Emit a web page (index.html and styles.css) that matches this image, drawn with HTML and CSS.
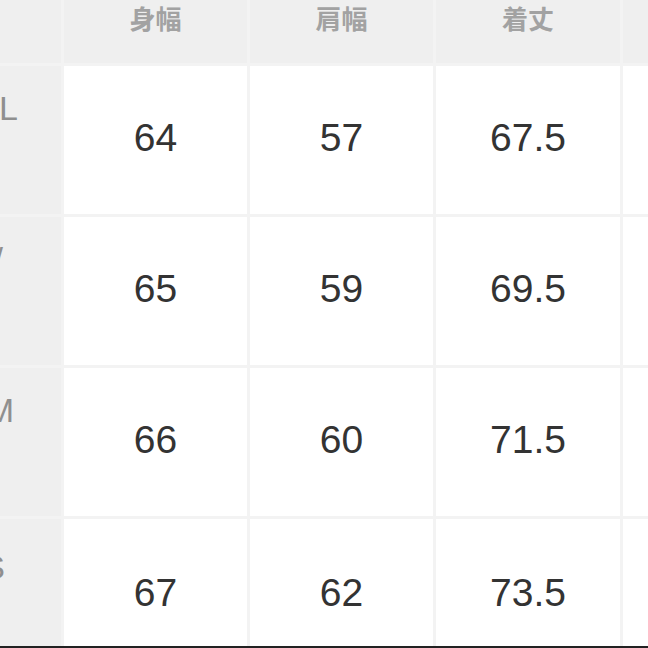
FILE: index.html
```html
<!DOCTYPE html>
<html lang="ja">
<head>
<meta charset="utf-8">
<title>サイズ表</title>
<link rel="stylesheet" href="styles.css">
</head>
<body>
<div class="page">
  <div class="table">
    <div class="head corner"></div>
    <div class="head"><span>身幅</span></div>
    <div class="head"><span>肩幅</span></div>
    <div class="head"><span>着丈</span></div>
    <div class="head"></div>

    <div class="label"><span class="lb lb1">XL</span></div>
    <div class="cell">64</div>
    <div class="cell">57</div>
    <div class="cell">67.5</div>
    <div class="cell"></div>

    <div class="label"><span class="lb lb2">/</span></div>
    <div class="cell">65</div>
    <div class="cell">59</div>
    <div class="cell">69.5</div>
    <div class="cell"></div>

    <div class="label"><span class="lb lb3">M</span></div>
    <div class="cell">66</div>
    <div class="cell">60</div>
    <div class="cell">71.5</div>
    <div class="cell"></div>

    <div class="label"><span class="lb lb4">S</span></div>
    <div class="cell last">67</div>
    <div class="cell last">62</div>
    <div class="cell last">73.5</div>
    <div class="cell last"></div>
  </div>
  <div class="bar"></div>
</div>
</body>
</html>
```

FILE: styles.css
```css
html, body {
  margin: 0;
  padding: 0;
  background: #f2f2f2;
}
.page {
  width: 648px;
  height: 648px;
  overflow: hidden;
  display: flex;
  flex-direction: column;
}
.table {
  display: grid;
  grid-template-columns: 61px 183px 183px 184px 1fr;
  grid-template-rows: 63px 148px 148px 148px 127px;
  column-gap: 3px;
  row-gap: 3px;
  background: #f3f3f3;
  overflow: hidden;
}
.head {
  background: #efefef;
  display: flex;
  justify-content: center;
  align-items: flex-start;
}
.head span {
  font-family: "Noto Sans CJK JP", "Noto Sans", sans-serif;
  font-weight: 700;
  font-size: 26px;
  line-height: 36px;
  color: #a2a2a2;
}
.label {
  background: #efefef;
  overflow: hidden;
  display: flex;
  justify-content: flex-end;
  align-items: flex-start;
}
.lb {
  font-family: "Liberation Sans", Arial, sans-serif;
  font-size: 34px;
  line-height: 34px;
  color: #8f8f8f;
  white-space: nowrap;
  padding-top: 25px;
}
.lb1 { margin-right: 43px; }
.lb2 { margin-right: 58px; }
.lb3 { margin-right: 47px; }
.lb4 { margin-right: 56px; padding-top: 31px; }
.cell {
  background: #ffffff;
  display: flex;
  justify-content: center;
  align-items: center;
  font-family: "Liberation Sans", Arial, sans-serif;
  font-size: 39px;
  color: #333333;
  padding-bottom: 4px;
  box-sizing: border-box;
}
.cell.last {
  padding-top: 20px;
  padding-bottom: 0;
}
.bar {
  height: 2px;
  background: #222222;
}
```
